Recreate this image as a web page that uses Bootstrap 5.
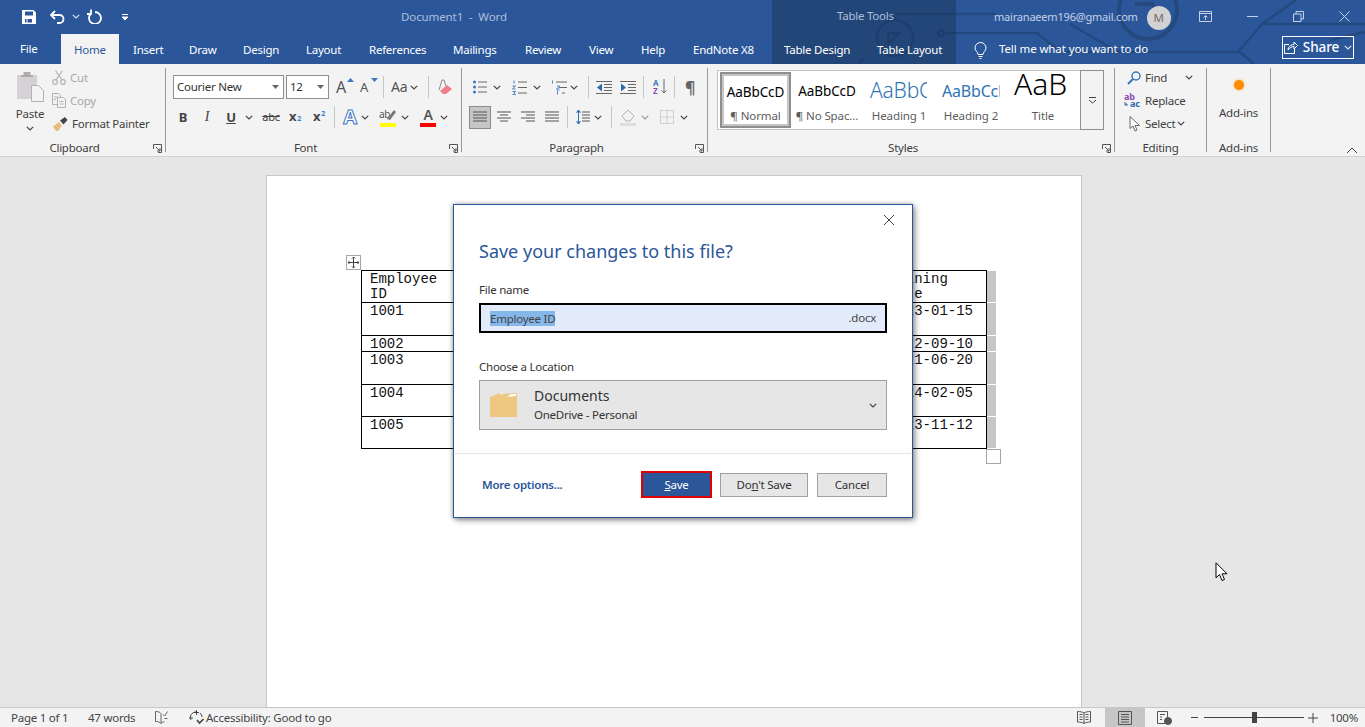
<!DOCTYPE html>
<html lang="en">
<head>
<meta charset="UTF-8" />
<title>Document1 - Word</title>
<link href="https://cdn.jsdelivr.net/npm/bootstrap@5.3.2/dist/css/bootstrap.min.css" rel="stylesheet">
<style>
  body { height: 727px; overflow: hidden; font-family: "Noto Sans", "Open Sans", sans-serif; font-size: 11.5px; letter-spacing: -.24px; color: #3f3f3f; background: #e6e6e6; }

  /* title bar + tabs */
  .wd-head { position: relative; background: linear-gradient(90deg, #2b579a 772px, #234678 772px, #234678 956px, #2b579a 956px); color: #fff; height: 64px; flex: none; }
  .wd-circuit { position: absolute; left: 0; top: 0; }
  .wd-title { position: relative; height: 36px; display: grid; grid-template-columns: 401px 436px 157px 1fr; align-items: center; }
  .qat { display: flex; align-items: center; margin-top: -3px; }
  .doc-name { color: #aebfdb; margin-top: -2px; letter-spacing: -.1px; }
  .tools-name { color: #aebfdb; margin-top: -4px; }
  .acct { display: flex; align-items: center; justify-content: flex-end; padding-right: 16px; margin-top: -3px; }
  .acct-mail { color: #c5d1e6; font-size: 11px; letter-spacing: -.2px; margin-top: 2px; }
  .acct-pic { width: 24px; height: 24px; border-radius: 50%; background: #d2d2d2; color: #7a6a6a; font-size: 11.5px; display: flex; align-items: center; justify-content: center; margin: 2px 28px 0 9px; flex: none; }
  .tabs { position: relative; height: 28px; display: grid; grid-template-columns: 61px 58px 56px 54px 63px 63px 84px 72px 64px 52px 52px 91px 93px 97px 1fr; }
  .tab-a { color: #fff; padding: 5px 0 0 14px; line-height: 18px; white-space: nowrap; }
  .tab-a:hover { color: #fff; }
  .tab-file { padding-left: 20px; padding-top: 4px; }
  .tab-on { background: #f3f3f3; color: #2b579a; margin-top: -2px; padding: 7px 0 0 13px; }
  .tab-on:hover { color: #2b579a; }
  .tell { display: flex; align-items: center; padding-left: 14px; }
  .tell-txt { margin-left: 12px; margin-top: -2px; white-space: nowrap; letter-spacing: -.1px; }
  .share-btn { margin-left: auto; margin-right: 11px; margin-top: -5px; width: 72px; height: 23px; border: 1px solid #fff; display: flex; align-items: center; justify-content: center; gap: 5px; font-size: 13.5px; font-weight: 500; letter-spacing: -.1px; border-radius: 0; color: #fff; padding: 0; }
  .share-btn:hover { color: #fff; }

  /* ribbon */
  .rib { height: 93px; flex: none; background: #f3f3f3; border-bottom: 1px solid #d2d2d2; display: flex; padding-top: 4px; }
  .rg { height: 84px; border-right: 1px solid #9a9a9a; flex: none; }
  .rg-clip { width: 166px; }
  .rg-font { width: 296px; }
  .rg-para { width: 246px; }
  .rg-styl { width: 407px; }
  .rg-edit { width: 92px; }
  .rg-add { width: 64px; }
  .rg-body { height: 72px; display: flow-root; }
  .rg-label { position: relative; height: 16px; line-height: 16px; text-align: center; color: #404040; }
  .rg-lab-l { padding-right: 16px; }
  .rg-launch { position: absolute; right: 3px; top: 4px; }
  .rib-less { margin-left: auto; margin-right: 7px; align-self: flex-end; margin-bottom: 2px; }
  .tb-row { display: flex; align-items: center; height: 24px; }
  .tb-row + .tb-row { margin-top: 6px; }
  .tb-first { margin-top: 7px; }
  .tb-gap { width: 1px; height: 22px; background: #c6c6c6; flex: none; }
  .g1 { margin-left: 1px; } .g2 { margin-left: 2px; } .g3 { margin-left: 3px; } .g4 { margin-left: 4px; } .g5 { margin-left: 5px; }
  .g6 { margin-left: 6px; } .g7 { margin-left: 7px; } .g8 { margin-left: 8px; } .g9 { margin-left: 9px; } .g10 { margin-left: 10px; }
  .g11 { margin-left: 11px; } .g12 { margin-left: 12px; } .g14 { margin-left: 14px; } .g19 { margin-left: 19px; } .g20 { margin-left: 20px; } .g18 { margin-left: 18px; } .g35 { margin-left: 35px; }
  .ms-qat { margin-left: 22px; }

  .clip-wrap { display: flex; }
  .paste-col { flex: none; display: flex; flex-direction: column; align-items: center; padding-top: 3px; margin-left: 15px; width: 30px; }
  .paste-txt { margin-top: 3px; line-height: 16px; }
  .clip-col { margin-left: 7px; margin-top: -2px; }
  .clip-line { display: flex; align-items: center; height: 23px; white-space: nowrap; }
  .clip-off { color: #a8a8a8; }
  .clip-txt { margin-left: 4px; }

  .font-pick { height: 24px; background: #fff; border: 1px solid #8f8f8f; display: flex; align-items: center; justify-content: space-between; padding: 0 4px 0 3px; color: #333; flex: none; }
  .font-name { width: 111px; }
  .font-size { width: 43px; }
  .tb-a { position: relative; font-size: 16px; line-height: 20px; width: 18px; text-align: left; color: #555; }
  .tb-a-sm { font-size: 13px; }
  .tb-a svg { position: absolute; right: 0; top: 1px; }
  .tb-aa { font-size: 14px; width: 18px; color: #555; line-height: 20px; }
  .tb-pil { font-size: 16px; color: #666; font-weight: 700; }
  .tb-fmt { width: 16px; text-align: center; font-size: 13px; font-weight: 700; color: #444; line-height: 18px; }
  .tb-ital { font-style: italic; font-weight: 400; font-family: "Liberation Serif", serif; font-size: 14px; }
  .tb-und { text-decoration: underline; }
  .tb-strike { width: 18px; font-size: 11px; font-weight: 400; text-decoration: line-through; color: #444; text-align: center; }
  .tb-idx { font-size: 7px; color: #2b7cd3; font-weight: 700; margin-left: 1px; }
  .tb-sup { position: relative; top: -5px; }
  .tb-glow { width: 18px; font-size: 20px; line-height: 22px; font-weight: 700; text-align: center; color: #fff; -webkit-text-stroke: 1px #3d78bd; }
  .tb-color { width: 16px; text-align: center; font-size: 14px; font-weight: 600; line-height: 14px; color: #555; border-bottom: 4px solid #f00; height: 19px; }
  .al-on { width: 22px; height: 23px; background: #c6c6c6; border: 1px solid #8a8a8a; display: flex; align-items: center; justify-content: center; flex: none; }

  .styl-box { display: flex; margin: 2px 0 0 9px; width: 387px; }
  .styl-list { display: flex; width: 364px; height: 60px; background: #fff; border: 1px solid #c6c6c6; padding: 1px 2px; overflow: hidden; }
  .styl-it { width: 72px; height: 56px; flex: none; text-align: center; overflow: hidden; }
  .styl-on { width: 71px; border: 2px solid #8f8f8f; outline: 2px solid #c6c6c6; outline-offset: -4px; }
  .styl-smp { height: 34px; line-height: 38px; font-size: 13.5px; letter-spacing: -.1px; color: #000; white-space: nowrap; overflow: hidden; text-align: center; }
  .styl-on .styl-smp { height: 32px; line-height: 36px; }
  .smp-h1 { font-size: 21px; letter-spacing: -.2px; color: #2e74b5; font-weight: 300; text-align: left; width: 57px; margin-left: 7px; line-height: 36px; }
  .smp-h2 { font-size: 16px; letter-spacing: -.2px; color: #2e74b5; text-align: left; width: 58px; margin-left: 7px; line-height: 38px; }
  .smp-t { font-size: 30px; letter-spacing: 0; line-height: 24px; text-align: left; width: 55px; margin-left: 7px; color: #000; font-weight: 300; }
  .styl-cap { color: #5c5c5c; line-height: 20px; white-space: nowrap; letter-spacing: -.1px; }
  .styl-more { width: 24px; height: 60px; margin-left: -1px; border: 1px solid #8f8f8f; background: #f3f3f3; display: flex; align-items: center; justify-content: center; flex: none; }

  .edit-wrap { margin-top: -2px; }
  .edit-line { display: flex; align-items: center; height: 23px; white-space: nowrap; }
  .edit-ic { width: 30px; display: flex; justify-content: flex-end; padding-right: 4px; flex: none; }

  .add-col { text-align: center; padding: 12px 0 0 0; }
  .add-dot { width: 10px; height: 10px; margin: 0 auto; border-radius: 50%; background: #ff8c00; box-shadow: 0 0 3px #ffb35c; }
  .add-txt { margin-top: 15px; line-height: 16px; }

  /* document */
  .doc-area { flex: 1 1 auto; min-height: 0; background: #e6e6e6; padding: 18px 0 0 266px; overflow: hidden; }
  .doc-page { width: 816px; height: 600px; background: #fff; border: 1px solid #c6c6c6; padding: 94px 0 0 94px; }
  .tbl-hold { position: relative; display: flex; width: 634px; }
  .doc-tbl { width: 626px; flex: none; table-layout: fixed; border-collapse: collapse; font-family: "Liberation Mono", "Courier New", monospace; font-size: 14px; letter-spacing: 0; line-height: 13px; color: #111; }
  .doc-tbl td { border: 1px solid #000; padding: 2px 8px 0; vertical-align: top; }
  .col-a { width: 92px; }
  .col-c { width: 106px; }
  .doc-tbl .rh-head td { line-height: 15px; padding-top: 1px; }
  .rh32 { height: 32px; } .rh33 { height: 33px; } .rh16 { height: 16px; }
  .sel-bars { display: flex; flex-direction: column; gap: 1px; width: 9px; padding-top: 1px; flex: none; }
  .sel-bars div { background: #c6c6c6; flex: none; }
  .bh31 { height: 31px; } .bh32 { height: 32px; } .bh15 { height: 15px; }
  .tbl-move { position: absolute; left: -15px; top: -15px; width: 15px; height: 15px; border: 1px solid #a6a6a6; background: #fff; display: flex; align-items: center; justify-content: center; }
  .tbl-size { position: absolute; left: 625px; top: 179px; width: 15px; height: 15px; border: 1px solid #a6a6a6; background: #fff; }

  /* dialog */
  .save-dlg { position: absolute; left: 453px; top: 204px; width: 460px; height: 314px; background: #fff; border: 1px solid #2b579a; box-shadow: 2px 2px 6px rgba(0,0,0,.45), -1px 0 4px rgba(0,0,0,.2); color: #333; }
  .dlg-top { height: 33px; display: flex; justify-content: flex-end; padding: 9px 17px 0 0; }
  .dlg-h { margin: 0 0 18px 25px; font-size: 18px; letter-spacing: 0; line-height: 26px; font-weight: 400; color: #2b579a; }
  .dlg-lb { margin: 0 0 5px 25px; line-height: 16px; color: #333; }
  .dlg-file { margin: 0 25px 26px; height: 30px; width: 408px; background: #e1ebf9; border: 2px solid #000; display: flex; align-items: center; justify-content: space-between; padding: 0 9px; color: #444; }
  .dlg-sel { background: #85b7ea; line-height: 15px; }
  .dlg-loc { margin: 0 25px 23px; width: 408px; height: 50px; background: #e6e6e6; border: 1px solid #a0a0a0; display: flex; align-items: center; padding: 0 9px 0 10px; }
  .loc-big { font-size: 14px; letter-spacing: 0; line-height: 19px; color: #333; }
  .loc-sm { line-height: 19px; color: #333; }
  .dlg-foot { border-top: 1px solid #e6e6e6; margin: 0 1px; padding: 17px 24px 0 27px; display: flex; align-items: center; }
  .dlg-more { font-weight: 600; color: #2b579a; text-decoration: none; margin-right: auto; }
  .dlg-btn { height: 24px; border: 1px solid #a0a0a0; background: #e6e6e6; border-radius: 0; font-size: 11.5px; letter-spacing: -.24px; line-height: 20px; padding: 0; color: #333; text-align: center; }
  .btn-save { width: 71px; height: 27px; background: #2b579a; border: 2px solid #e00000; color: #fff; }
  .btn-save:hover { background: #2b579a; border-color: #e00000; color: #fff; }
  .btn-dont { width: 88px; margin-left: 8px; }
  .btn-cancel { width: 70px; margin-left: 9px; }

  .mouse-arrow { position: absolute; left: 1215px; top: 562px; }

  /* status bar */
  .stat { height: 20px; flex: none; background: #f3f3f3; border-top: 1px solid #c6c6c6; display: flex; align-items: center; color: #444; white-space: nowrap; }
  .st-page { margin-left: 11px; width: 77px; }
  .st-words { width: 67px; }
  .st-acc { margin-left: 1px; }
  .st-print { width: 40px; height: 20px; background: #c6c6c6; display: flex; align-items: center; justify-content: center; margin-left: 14px; }
  .st-right { margin-left: auto; display: flex; align-items: center; height: 100%; }
  .st-slide { position: relative; width: 100px; height: 1px; background: #444; margin: 0 4px 0 6px; }
  .st-knob { position: absolute; left: 48px; top: -5px; width: 5px; height: 11px; background: #444; }
  .st-zoom { margin: 0 7px 0 12px; }
</style>
</head>
<body class="d-flex flex-column">
<svg width="0" height="0" class="position-absolute">
  <symbol id="chv" viewBox="0 0 8 5"><path d="M.8.8 4 4 7.2.8" fill="none" stroke="#444" stroke-width="1.2"/></symbol>
  <symbol id="chw" viewBox="0 0 8 5"><path d="M.8.8 4 4 7.2.8" fill="none" stroke="#dfe6f2" stroke-width="1.1"/></symbol>
  <symbol id="launch" viewBox="0 0 9 9"><path d="M.5 5V.5h8v8H5M3 3l4 4M7 4v3H4" fill="none" stroke="#555"/></symbol>
  <symbol id="lines" viewBox="0 0 14 12"><path d="M0 1h14M0 4h14M0 7h14M0 10h14" stroke="#555"/></symbol>
</svg>

<header class="wd-head">
  <svg class="wd-circuit" width="1365" height="64" fill="none" stroke="#24497f" stroke-width="2.5">
    <circle cx="895" cy="38" r="18" stroke="#1d3d6d"/>
    <path d="M888 44l12-12M888 33h12v-1M888 33v10" stroke="#1d3d6d"/>
    <path d="M897 14h59" stroke="#1d3d6d"/><path d="M956 14h40"/>
    <circle cx="941" cy="33" r="3" stroke="#1d3d6d"/>
    <path d="M945 33h11" stroke="#1d3d6d"/>
    <path d="M956 33h81l24 19h177l24-28h103M1262 24l34-24"/>
    <circle cx="1148" cy="10" r="29" stroke-width="4"/>
    <path d="M1135 4h18v14" stroke-width="3.500"/>
    <path d="M1070 24l48 28M1240 52l14 12M1330 40l35-8"/>
    <path d="M864 60h-2l-3 4" stroke="#1d3d6d"/>
  </svg>
  <div class="wd-title">
    <div class="qat">
      <svg class="ms-qat flex-none" width="14" height="14" viewBox="0 0 14 14"><path fill="#fff" fill-rule="evenodd" d="M0 0h11.500L14 2.500V14H0zM3 1.500v4h8v-4zM3 9v3.500h1.500V9zM5.500 9v3.500H10V9z"/></svg>
      <svg class="g14" width="16" height="14" viewBox="0 0 16 14" fill="none" stroke="#fff" stroke-width="1.800"><path d="M5 1 1 5l4 4M1 5h8.500a4 4 0 0 1 0 8H7"/></svg>
      <svg class="g6" width="8" height="5"><use href="#chw"/></svg>
      <svg class="g7" width="15" height="15" viewBox="0 0 15 15" fill="none" stroke="#fff" stroke-width="1.800"><path d="M4 .5V5H0M4 4.500a6 6 0 1 0 4-1.500"/></svg>
      <svg class="g19" width="8" height="8" viewBox="0 0 8 8"><path d="M1 1.500h6M1 4l3 3 3-3z" fill="#fff" stroke="#fff"/></svg>
    </div>
    <span class="doc-name">Document1&nbsp; -&nbsp; Word</span>
    <span class="tools-name">Table Tools</span>
    <div class="acct">
      <span class="acct-mail">mairanaeem196@gmail.com</span>
      <span class="acct-pic">M</span>
      <svg width="13" height="11" viewBox="0 0 13 11" fill="none" stroke="#c5d1e6"><path d="M.5.5h12v10H.5zM.5 2.500h12M6.500 9V4.500M4.500 6.500l2-2 2 2"/></svg>
      <svg class="g35" width="11" height="1"><path d="M0 .5h11" stroke="#c5d1e6"/></svg>
      <svg class="g35" width="11" height="11" viewBox="0 0 11 11" fill="none" stroke="#c5d1e6"><path d="M.5 3h7.500v7.500H.5zM3 3V.5h7.500V8H8"/></svg>
      <svg class="g35" width="11" height="11" viewBox="0 0 11 11" stroke="#c5d1e6"><path d="M.5.5l10 10M10.500.5l-10 10"/></svg>
    </div>
  </div>
  <nav class="tabs">
    <a class="tab-a tab-file text-decoration-none" href="#">File</a>
    <a class="tab-a tab-on text-decoration-none" href="#">Home</a>
    <a class="tab-a text-decoration-none" href="#">Insert</a>
    <a class="tab-a text-decoration-none" href="#">Draw</a>
    <a class="tab-a text-decoration-none" href="#">Design</a>
    <a class="tab-a text-decoration-none" href="#">Layout</a>
    <a class="tab-a text-decoration-none" href="#">References</a>
    <a class="tab-a text-decoration-none" href="#">Mailings</a>
    <a class="tab-a text-decoration-none" href="#">Review</a>
    <a class="tab-a text-decoration-none" href="#">View</a>
    <a class="tab-a text-decoration-none" href="#">Help</a>
    <a class="tab-a text-decoration-none" href="#">EndNote X8</a>
    <a class="tab-a text-decoration-none" href="#">Table Design</a>
    <a class="tab-a text-decoration-none" href="#">Table Layout</a>
    <div class="tell">
      <svg width="13" height="17" viewBox="0 0 13 17" fill="none" stroke="#fff"><path d="M4 12.500C4 10 1 9 1 6a5.500 5.500 0 0 1 11 0c0 3-3 4-3 6.500zM4.500 14.500h4M5.500 16.500h2"/></svg>
      <span class="tell-txt">Tell me what you want to do</span>
      <a class="btn share-btn" href="#">
        <svg width="14" height="13" viewBox="0 0 14 13" fill="none" stroke="#fff"><path d="M5 3.500H.5v9h10V8M4 9c0-3 3-5.500 6-5.500V1l3.500 3.500L10 8V5.500C7.500 5.500 5.500 7 4 9z"/></svg>
        <span>Share</span>
        <svg width="8" height="5"><use href="#chw"/></svg>
      </a>
    </div>
  </nav>
</header>

<section class="rib">
  <div class="rg rg-clip">
    <div class="rg-body clip-wrap">
      <div class="paste-col">
        <svg width="29" height="32" viewBox="0 0 29 32"><path fill="#d5d2d5" d="M1 4h6V1h8v3h6v24H1z"/><path fill="#9c989c" d="M8 1h6v3h3v2H5V4h3z" opacity=".7"/><path fill="#f6f3f7" stroke="#b5b0b5" d="M15.500 14.500h7l5 5v11h-12z"/></svg>
        <span class="paste-txt">Paste</span>
        <svg class="mt-1" width="8" height="5"><use href="#chv"/></svg>
      </div>
      <div class="clip-col">
        <div class="clip-line clip-off">
          <svg width="14" height="15" viewBox="0 0 14 15" fill="none" stroke="#b4b0b4" stroke-width="1.200"><circle cx="3" cy="12" r="2.300"/><circle cx="11" cy="12" r="2.300"/><path d="M4 10 10.500.5M10 10 3.500.5"/></svg>
          <span class="clip-txt">Cut</span>
        </div>
        <div class="clip-line clip-off">
          <svg width="14" height="15" viewBox="0 0 14 15" fill="#f3f3f3" stroke="#b4b0b4"><path d="M.5.5h6l2 2v9h-8z"/><path d="M5.500 4.500h6l2 2v8h-8zM2 4h4M2 6.500h2M7.500 8.500h4M7.500 11h4"/></svg>
          <span class="clip-txt">Copy</span>
        </div>
        <div class="clip-line">
          <svg width="16" height="15" viewBox="0 0 16 15"><path fill="#e8bd7a" d="M1 10.500 7 6l3 3.500L6 15H4l-1-1.500z"/><path fill="#444" d="M8 4.500 13 1l2.500 3-4 4.500z"/></svg>
          <span class="clip-txt">Format Painter</span>
        </div>
      </div>
    </div>
    <div class="rg-label rg-lab-l">Clipboard<svg class="rg-launch" width="9" height="9"><use href="#launch"/></svg></div>
  </div>

  <div class="rg rg-font">
    <div class="rg-body">
      <div class="tb-row tb-first">
        <div class="font-pick font-name g7"><span>Courier New</span><svg width="7" height="4" viewBox="0 0 7 4"><path d="M0 0h7L3.500 4z" fill="#666"/></svg></div>
        <div class="font-pick font-size g2"><span>12</span><svg width="7" height="4" viewBox="0 0 7 4"><path d="M0 0h7L3.500 4z" fill="#666"/></svg></div>
        <span class="tb-a g7">A<svg width="7" height="4" viewBox="0 0 7 4"><path d="M0 4h7L3.500 0z" fill="#3d78bd"/></svg></span>
        <span class="tb-a tb-a-sm g6">A<svg width="7" height="4" viewBox="0 0 7 4"><path d="M0 0h7L3.500 4z" fill="#3d78bd"/></svg></span>
        <div class="tb-gap g5"></div>
        <span class="tb-aa g7">Aa</span>
        <svg class="g1 flex-none" width="8" height="5"><use href="#chv"/></svg>
        <div class="tb-gap g10"></div>
        <svg class="g8 flex-none" width="16" height="16" viewBox="0 0 16 16"><path d="M2 11 5 1h2l2 6" fill="none" stroke="#8a8a8a"/><path d="M3 12 10 6l5 4-6 5H6z" fill="#ef7d8c"/></svg>
      </div>
      <div class="tb-row">
        <span class="tb-fmt g9">B</span>
        <span class="tb-fmt tb-ital g8">I</span>
        <span class="tb-fmt tb-und g8">U</span>
        <svg class="g6 flex-none" width="8" height="5"><use href="#chv"/></svg>
        <span class="tb-fmt tb-strike g9">abc</span>
        <span class="tb-fmt g7">x<span class="tb-idx">2</span></span>
        <span class="tb-fmt g8">x<span class="tb-idx tb-sup">2</span></span>
        <div class="tb-gap g7"></div>
        <span class="tb-fmt tb-glow g6">A</span>
        <svg class="g2 flex-none" width="8" height="5"><use href="#chv"/></svg>
        <svg class="g10 flex-none" width="18" height="19" viewBox="0 0 18 19"><text x="0" y="10" font-size="10" fill="#555">ab</text><path d="M8 11 15 2l2 2-6 8z" fill="#777"/><path d="M1 15h16v4H1z" fill="#ff0"/></svg>
        <svg class="g4 flex-none" width="8" height="5"><use href="#chv"/></svg>
        <span class="tb-fmt tb-color g11">A</span>
        <svg class="g4 flex-none" width="8" height="5"><use href="#chv"/></svg>
      </div>
    </div>
    <div class="rg-label rg-lab-l">Font<svg class="rg-launch" width="9" height="9"><use href="#launch"/></svg></div>
  </div>

  <div class="rg rg-para">
    <div class="rg-body">
      <div class="tb-row tb-first">
        <svg class="g11 flex-none" width="14" height="14" viewBox="0 0 14 14"><path d="M5 2h9M5 7h9M5 12h9" stroke="#666"/><circle cx="1.500" cy="2" r="1.500" fill="#3d78bd"/><circle cx="1.500" cy="7" r="1.500" fill="#3d78bd"/><circle cx="1.500" cy="12" r="1.500" fill="#3d78bd"/></svg>
        <svg class="g6 flex-none" width="8" height="5"><use href="#chv"/></svg>
        <svg class="g11 flex-none" width="15" height="15" viewBox="0 0 15 15"><path d="M6 2h9M6 7.500h9M6 13h9" stroke="#666"/><path d="M2 .5v3M.5 6h3l-3 3h3M.5 11.500h3l-1.500 1.500 1.500 1.500h-3" fill="none" stroke="#3d78bd" stroke-width=".9"/></svg>
        <svg class="g6 flex-none" width="8" height="5"><use href="#chv"/></svg>
        <svg class="g10 flex-none" width="16" height="15" viewBox="0 0 16 15"><path d="M5 2h11M9 7.500h7M11 13h3" stroke="#666"/><path d="M1.500.5v3M6 6h2.500v2H6v2h2.500M6.500 11v3.500" fill="none" stroke="#3d78bd" stroke-width=".9"/></svg>
        <svg class="g3 flex-none" width="8" height="5"><use href="#chv"/></svg>
        <div class="tb-gap g10"></div>
        <svg class="g7 flex-none" width="16" height="13" viewBox="0 0 16 13"><path d="M0 .5h16M8 3.500h8M8 6.500h8M8 9.500h8M0 12.500h16" stroke="#666"/><path d="M6 2.500v8L1 6.500z" fill="#2b6cb0"/></svg>
        <svg class="g8 flex-none" width="16" height="13" viewBox="0 0 16 13"><path d="M0 .5h16M8 3.500h8M8 6.500h8M8 9.500h8M0 12.500h16" stroke="#666"/><path d="M1 2.500v8l5-4z" fill="#2b6cb0"/></svg>
        <div class="tb-gap g7"></div>
        <svg class="g9 flex-none" width="14" height="16" viewBox="0 0 14 16" font-size="8" font-weight="700"><text x="0" y="7" fill="#3d78bd">A</text><text x="0" y="15" fill="#8a4ab0">Z</text><path d="M11 0v14M8.500 11.500 11 14l2.500-2.500" fill="none" stroke="#666"/></svg>
        <div class="tb-gap g7"></div>
        <span class="g10 flex-none tb-aa tb-pil">¶</span>
      </div>
      <div class="tb-row">
        <div class="al-on g7"><svg width="14" height="12"><use href="#lines"/></svg></div>
        <svg class="g6 flex-none" width="14" height="12" viewBox="0 0 14 12"><path d="M0 1h14M3 4h8M0 7h14M3 10h8" stroke="#555"/></svg>
        <svg class="g10 flex-none" width="14" height="12" viewBox="0 0 14 12"><path d="M0 1h14M5 4h9M0 7h14M5 10h9" stroke="#555"/></svg>
        <svg class="g10 flex-none" width="14" height="12"><use href="#lines"/></svg>
        <div class="tb-gap g8"></div>
        <svg class="g8 flex-none" width="14" height="16" viewBox="0 0 14 16"><path d="M6 3h8M6 6h8M6 9h8M6 12h8" stroke="#555"/><path d="M2.500 1v14" stroke="#2b6cb0"/><path d="M.5 3.500 2.500 1l2 2.500M.5 12.500l2 2.500 2-2.500" fill="#2b6cb0" stroke="#2b6cb0"/></svg>
        <svg class="g4 flex-none" width="8" height="5"><use href="#chv"/></svg>
        <div class="tb-gap g9"></div>
        <svg class="g8 flex-none" width="16" height="17" viewBox="0 0 16 17"><path d="M2 7 8 1l6 6-4 5H6z" fill="none" stroke="#b4b0b4"/><path d="M0 14h16v3H0z" fill="#e2dede"/></svg>
        <svg class="g5 flex-none opacity-50" width="8" height="5"><use href="#chv"/></svg>
        <svg class="g11 flex-none" width="14" height="14" viewBox="0 0 14 14" fill="none" stroke="#b9a9b9" stroke-dasharray="1 1"><path d="M.5.5h13v13H.5zM7 .5v13M.5 7h13"/></svg>
        <svg class="g6 flex-none" width="8" height="5"><use href="#chv"/></svg>
      </div>
    </div>
    <div class="rg-label rg-lab-l">Paragraph<svg class="rg-launch" width="9" height="9"><use href="#launch"/></svg></div>
  </div>

  <div class="rg rg-styl">
    <div class="rg-body">
      <div class="styl-box">
        <div class="styl-list">
          <div class="styl-it styl-on"><div class="styl-smp">AaBbCcD</div><div class="styl-cap">¶ Normal</div></div>
          <div class="styl-it"><div class="styl-smp">AaBbCcD</div><div class="styl-cap">¶ No Spac...</div></div>
          <div class="styl-it"><div class="styl-smp smp-h1">AaBbCcD</div><div class="styl-cap">Heading 1</div></div>
          <div class="styl-it"><div class="styl-smp smp-h2">AaBbCcD</div><div class="styl-cap">Heading 2</div></div>
          <div class="styl-it"><div class="styl-smp smp-t">AaBbC</div><div class="styl-cap">Title</div></div>
        </div>
        <div class="styl-more"><svg width="9" height="7" viewBox="0 0 9 7"><path d="M1 .5h7M1 3l3.500 3L8 3" fill="none" stroke="#444"/></svg></div>
      </div>
    </div>
    <div class="rg-label rg-lab-l">Styles<svg class="rg-launch" width="9" height="9"><use href="#launch"/></svg></div>
  </div>

  <div class="rg rg-edit">
    <div class="rg-body">
      <div class="edit-wrap">
      <div class="edit-line">
        <span class="edit-ic"><svg width="14" height="14" viewBox="0 0 14 14" fill="none"><circle cx="9" cy="5" r="4" stroke="#3d78bd" stroke-width="1.500"/><path d="M6 8 1 13" stroke="#3d78bd" stroke-width="2.200"/></svg></span>
        <span>Find</span>
        <svg class="flex-none g18" width="8" height="5"><use href="#chv"/></svg>
      </div>
      <div class="edit-line">
        <span class="edit-ic"><svg width="17" height="15" viewBox="0 0 17 15" font-size="9" font-weight="700"><text x="0" y="7" fill="#8a4ab0">ab</text><text x="6" y="14" fill="#2b6cb0">ac</text><path d="M1 9v3h3M3 10.500 1 12" fill="none" stroke="#2b6cb0"/></svg></span>
        <span>Replace</span>
      </div>
      <div class="edit-line">
        <span class="edit-ic"><svg width="12" height="16" viewBox="0 0 12 16"><path d="M1 .5v12l3-2.500 2 5 2-1-2-4.500h4.500z" fill="#fff" stroke="#666"/></svg></span>
        <span>Select</span>
        <svg class="flex-none g2" width="8" height="5"><use href="#chv"/></svg>
      </div>
      </div>
    </div>
    <div class="rg-label">Editing</div>
  </div>

  <div class="rg rg-add">
    <div class="rg-body add-col">
      <div class="add-dot"></div>
      <div class="add-txt">Add-ins</div>
    </div>
    <div class="rg-label">Add-ins</div>
  </div>

  <svg class="rib-less" width="12" height="7" viewBox="0 0 12 7"><path d="M1 6l5-5 5 5" fill="none" stroke="#444"/></svg>
</section>

<main class="doc-area">
  <div class="doc-page">
    <div class="tbl-hold">
      <span class="tbl-move">
        <svg width="11" height="11" viewBox="0 0 11 11" fill="none" stroke="#444"><path d="M5.500 0v11M0 5.500h11M4 1.500 5.500 0 7 1.500M4 9.500 5.500 11 7 9.500M1.500 4 0 5.500 1.500 7M9.500 4 11 5.500 9.500 7"/></svg>
      </span>
      <table class="doc-tbl">
        <colgroup><col class="col-a"><col><col class="col-c"></colgroup>
        <tbody>
          <tr class="rh32 rh-head"><td>Employee ID</td><td></td><td>Joining Date</td></tr>
          <tr class="rh33"><td>1001</td><td></td><td>2023-01-15</td></tr>
          <tr class="rh16"><td>1002</td><td></td><td>2022-09-10</td></tr>
          <tr class="rh33"><td>1003</td><td></td><td>2021-06-20</td></tr>
          <tr class="rh32"><td>1004</td><td></td><td>2024-02-05</td></tr>
          <tr class="rh32"><td>1005</td><td></td><td>2023-11-12</td></tr>
        </tbody>
      </table>
      <div class="sel-bars">
        <div class="bh31"></div><div class="bh32"></div><div class="bh15"></div><div class="bh32"></div><div class="bh31"></div><div class="bh31"></div>
      </div>
      <span class="tbl-size"></span>
    </div>
  </div>
</main>

<footer class="stat">
  <span class="st-page">Page 1 of 1</span>
  <span class="st-words">47 words</span>
  <svg width="13" height="13" viewBox="0 0 13 13" fill="none" stroke="#666"><path d="M6 2.500C5 1 3 .5.500.5v10C3 10.500 5 11 6 12.500V2.500zM6 12.500c.7-1 2-1.600 3.500-1.900M8 3.500l1.500 1.500L12.500.5M9.500 7.500h3"/></svg>
  <svg class="flex-none g20" width="17" height="15" viewBox="0 0 17 15" fill="none" stroke="#444"><path d="M3 10a5.500 5.500 0 0 1 5-8M12 3a5.500 5.500 0 0 1 2 4M8.500 0v5M6 2.500h5M1 8h4"/><path d="M9 10l2.500 3 4-4" stroke-width="1.600"/></svg>
  <span class="st-acc">Accessibility: Good to go</span>
  <div class="st-right">
    <svg width="14" height="13" viewBox="0 0 14 13" fill="none" stroke="#555"><path d="M7 2C5.500 1 3 .5.500.5v10.500c2.500 0 5 .5 6.500 1.500 1.500-1 4-1.500 6.500-1.500V.5C11 .5 8.500 1 7 2zM7 2v10.500M2.500 3.500h3M2.500 6h3M2.500 8.500h3M8.500 3.500h3M8.500 6h3M8.500 8.500h3"/></svg>
    <span class="st-print"><svg width="14" height="14" viewBox="0 0 14 14" fill="none" stroke="#555"><path d="M.5.500h13v13H.5zM3 3.500h8M3 6h8M3 8.500h8M3 11h8"/></svg></span>
    <svg class="g12 flex-none" width="15" height="14" viewBox="0 0 15 14" fill="none" stroke="#555"><path d="M.5.500h10v12H.5zM3 3.500h5M3 6h2M3 8.500h2"/><circle cx="11" cy="10" r="3.500" fill="#555"/></svg>
    <svg class="flex-none g19" width="7" height="1"><path d="M0 .5h7" stroke="#444"/></svg>
    <div class="st-slide"><span class="st-knob"></span></div>
    <svg class="flex-none" width="10" height="10" viewBox="0 0 10 10"><path d="M0 5h10M5 0v10" stroke="#444"/></svg>
    <span class="st-zoom">100%</span>
  </div>
</footer>

<!-- dialog sits over the document -->
<div class="save-dlg">
  <div class="dlg-top">
    <svg width="12" height="12" viewBox="0 0 12 12" stroke="#444"><path d="M1 1l10 10M11 1 1 11"/></svg>
  </div>
  <h1 class="dlg-h">Save your changes to this file?</h1>
  <p class="dlg-lb">File name</p>
  <div class="dlg-file"><span class="dlg-sel">Employee ID</span><span>.docx</span></div>
  <p class="dlg-lb">Choose a Location</p>
  <div class="dlg-loc">
    <svg class="flex-none" width="28" height="25" viewBox="0 0 28 25"><path fill="#eec880" d="M0 4 10 0v2h0L17 .5h0l8-.5h2v24H0z"/><path fill="#fff" d="M17 4l4-3h5v2z"/></svg>
    <div class="ms-3">
      <div class="loc-big">Documents</div>
      <div class="loc-sm">OneDrive - Personal</div>
    </div>
    <svg class="ms-auto" width="8" height="5"><use href="#chv"/></svg>
  </div>
  <div class="dlg-foot">
    <a class="dlg-more" href="#">More options...</a>
    <button class="btn dlg-btn btn-save"><u>S</u>ave</button>
    <button class="btn dlg-btn btn-dont">Do<u>n</u>'t Save</button>
    <button class="btn dlg-btn btn-cancel">Cancel</button>
  </div>
</div>

<svg class="mouse-arrow" width="13" height="20" viewBox="0 0 13 20"><path d="M1 .8v15l3.500-3.300 2.500 6 2.500-1-2.500-5.700h5z" fill="#fff" stroke="#000"/></svg>

<script src="https://cdn.jsdelivr.net/npm/bootstrap@5.3.2/dist/js/bootstrap.bundle.min.js"></script>
</body>
</html>
